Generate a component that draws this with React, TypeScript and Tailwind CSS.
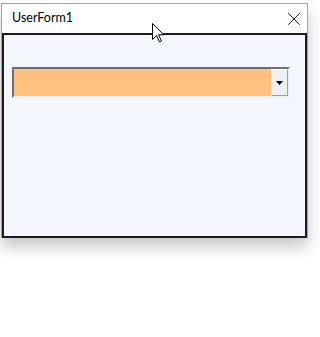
import { X } from 'lucide-react'

function Cursor() {
  return (
    <svg width="13" height="20" viewBox="0 0 13 20" className="absolute left-[152px] top-[20px]">
      <path
        d="M0.5 0.5 L0.5 16.5 L4.5 12.5 L7.5 19 L9.5 18 L6.5 11.8 L12 11.8 Z"
        fill="#fff"
        stroke="#000"
        strokeWidth="1"
        strokeLinejoin="miter"
      />
    </svg>
  )
}

function ComboBox() {
  return (
    <div className="flex h-[31px] w-[278px] border-2 border-t-[#6e6e6e] border-l-[#6e6e6e] border-b-[#eef0f4] border-r-[#eef0f4]">
      <div className="flex-1 bg-[#ffc17f]" />
      <div className="flex w-[17px] items-center justify-center border border-t-white border-l-white border-b-[#a0a0a0] border-r-[#a0a0a0] bg-[#f0f0f0]">
        <svg width="7" height="4" viewBox="0 0 7 4">
          <path d="M0 0 H7 L3.5 4 Z" fill="#000" />
        </svg>
      </div>
    </div>
  )
}

export default function App() {
  return (
    <div className="relative h-[337px] w-[312px] bg-white" style={{ fontFamily: 'Lato, "Noto Sans", sans-serif' }}>
      <div className="ml-[1px] mt-[3px] w-[307px] border border-b-0 border-[#a3a3a3] bg-white shadow-[0_9px_14px_rgba(0,0,0,0.22)]">
        <div className="flex h-[29px] items-center justify-between pl-[10px] pr-[2px]">
          <span className="text-[12.5px] leading-none text-black">UserForm1</span>
          <X size={22} strokeWidth={1} className="text-black" />
        </div>
        <div className="h-[205px] border-2 border-[#1c1c1c] bg-[#f3f6fc] pl-[8px] pt-[32px]">
          <ComboBox />
        </div>
      </div>
      <Cursor />
    </div>
  )
}
